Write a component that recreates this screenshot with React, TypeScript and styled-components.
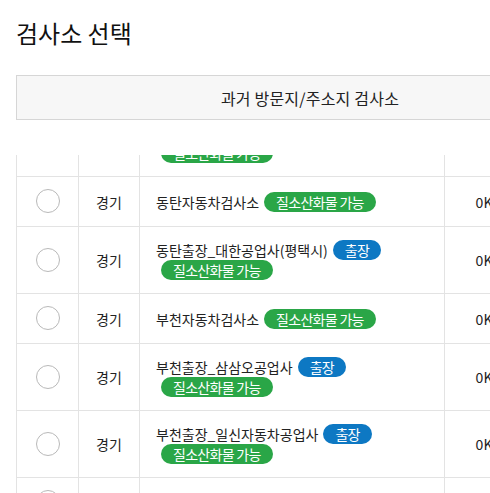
import React, { useLayoutEffect, useRef } from "react";
import styled, { createGlobalStyle } from "styled-components";

const GlobalStyle = createGlobalStyle`
  html, body { margin: 0; padding: 0; background: #fff; overflow: hidden; }
  body { font-family: "Noto Sans CJK KR", "Noto Sans", sans-serif; color: #222; }
  * { box-sizing: border-box; }
`;

const Page = styled.div`
  width: 1188px;
  height: 493px;
  padding: 18px 0 0 16px;
  display: flex;
  flex-direction: column;
`;

const Title = styled.h1`
  margin: 0;
  font-size: 24px;
  line-height: 30px;
  font-weight: 400;
  color: #111;
`;

const Tabs = styled.div`
  margin-top: 27px;
  display: grid;
  grid-template-columns: 586px 586px;
  border: 1px solid #d6d6d6;
  background: #f7f7f7;
  height: 45px;
`;

const Tab = styled.div`
  display: flex;
  align-items: center;
  justify-content: center;
  font-size: 16px;
  letter-spacing: 0.2px;
  color: #222;
`;

const ScrollArea = styled.div`
  margin-top: 35px;
  flex: 1;
  min-height: 0;
  overflow: hidden;
`;

const Table = styled.div`
  display: flex;
  flex-direction: column;
  border-left: 1px solid #e3e3e3;
`;

const Row = styled.div`
  display: grid;
  grid-template-columns: 62px 61px 305px 86px 1fr;
`;

const Cell = styled.div<{ $align?: "center" | "left" }>`
  border-right: 1px solid #e3e3e3;
  border-bottom: 1px solid #e3e3e3;
  display: flex;
  align-items: center;
  justify-content: ${(p) => (p.$align === "left" ? "flex-start" : "center")};
  padding: 13px 16px;
  font-size: 14px;
  line-height: 20px;
  color: #222;
`;

const RadioCell = styled(Cell)`
  padding: 12px 0 13px;
`;

const DistCell = styled(Cell)`
  padding-left: 22px;
`;

const Radio = styled.span`
  width: 24px;
  height: 24px;
  border-radius: 50%;
  border: 1px solid #b9b9b9;
  background: #fff;
  display: block;
`;

const NameBox = styled.div`
  line-height: 20px;
`;

const Badge = styled.span<{ $tone: "green" | "blue" }>`
  display: inline-block;
  vertical-align: top;
  height: 20px;
  line-height: 20px;
  padding: 0 12px;
  margin-left: 5px;
  border-radius: 10px;
  font-size: 14px;
  letter-spacing: -0.7px;
  color: #fff;
  background: ${(p) => (p.$tone === "green" ? "#2aa647" : "#0d78c3")};
  white-space: nowrap;
`;

type Station = { region: string; name: string; trip: boolean; nox: boolean; dist: string };

const stations: Station[] = [
  { region: "경기", name: "동탄출장_보성자동차공업사", trip: true, nox: true, dist: "0Km" },
  { region: "경기", name: "동탄자동차검사소", trip: false, nox: true, dist: "0Km" },
  { region: "경기", name: "동탄출장_대한공업사(평택시)", trip: true, nox: true, dist: "0Km" },
  { region: "경기", name: "부천자동차검사소", trip: false, nox: true, dist: "0Km" },
  { region: "경기", name: "부천출장_삼삼오공업사", trip: true, nox: true, dist: "0Km" },
  { region: "경기", name: "부천출장_일신자동차공업사", trip: true, nox: true, dist: "0Km" },
  { region: "경기", name: "부평자동차검사소", trip: false, nox: true, dist: "0Km" },
];

export default function App() {
  const scrollRef = useRef<HTMLDivElement>(null);
  useLayoutEffect(() => {
    if (scrollRef.current) scrollRef.current.scrollTop = 45;
  }, []);

  return (
    <>
      <GlobalStyle />
      <Page>
        <Title>검사소 선택</Title>
        <Tabs>
          <Tab>과거 방문지/주소지 검사소</Tab>
          <Tab />
        </Tabs>
        <ScrollArea ref={scrollRef}>
          <Table>
            {stations.map((s, i) => (
              <Row key={i}>
                <RadioCell>
                  <Radio />
                </RadioCell>
                <Cell>{s.region}</Cell>
                <Cell $align="left">
                  <NameBox>
                    {s.name}
                    {s.trip && <Badge $tone="blue">출장</Badge>}
                    {s.nox && <Badge $tone="green">질소산화물 가능</Badge>}
                  </NameBox>
                </Cell>
                <DistCell>{s.dist}</DistCell>
                <Cell />
              </Row>
            ))}
          </Table>
        </ScrollArea>
      </Page>
    </>
  );
}
